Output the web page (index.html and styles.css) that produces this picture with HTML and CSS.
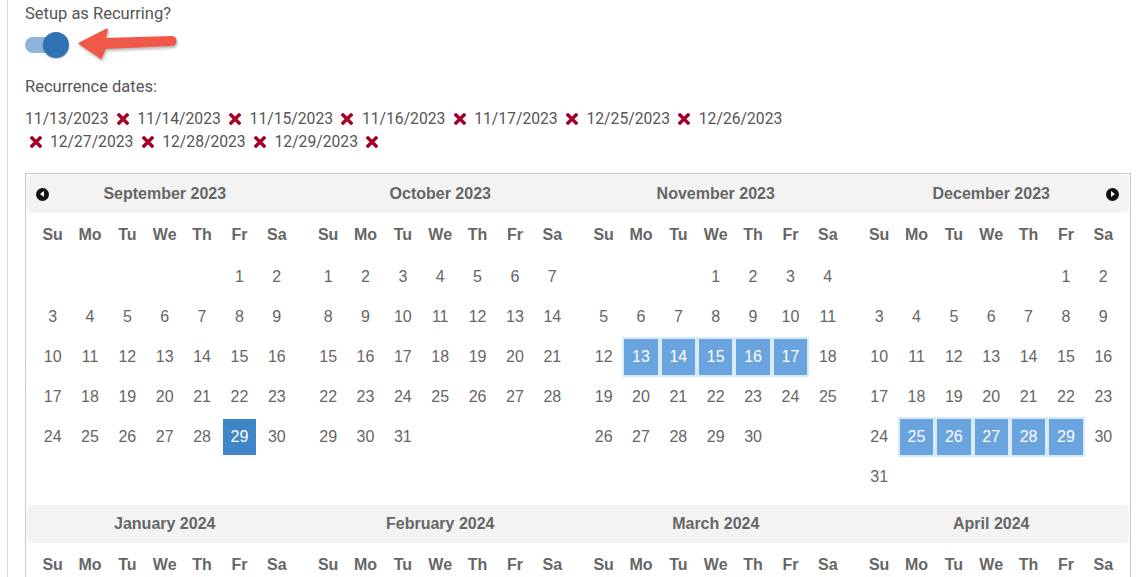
FILE: index.html
```html
<!DOCTYPE html>
<html lang="en">
<head>
    <meta charset="UTF-8">
    <title>Recurring Event</title>
    <link rel="stylesheet" href="styles.css">
</head>
<body>
    <div class="page">
        <div class="field-label">Setup as Recurring?</div>

        <div class="toggle-row">
            <div class="toggle">
                <div class="toggle-track"></div>
                <div class="toggle-knob"></div>
            </div>
            <svg class="arrow" width="104" height="36" viewBox="0 0 104 36">
                <path d="M3.5,16.3 L31,2.5 L28.5,12 L95,10 Q99.5,10 99.5,14 Q99.5,18 95,18 L29,21 L25,31 Z" fill="#f0594a" stroke="#f0594a" stroke-width="2" stroke-linejoin="round"/>
            </svg>
        </div>

        <div class="field-label second">Recurrence dates:</div>

        <div class="dates" id="dates"></div>

        <div class="calendar" id="calendar"></div>
    </div>

    <script>
        const dates = ["11/13/2023", "11/14/2023", "11/15/2023", "11/16/2023", "11/17/2023",
                       "12/25/2023", "12/26/2023", "12/27/2023", "12/28/2023", "12/29/2023"];
        const removeIcon = '<svg class="remove" width="12" height="12" viewBox="0 0 12 12">' +
            '<path d="M2,2 L10,10 M10,2 L2,10" stroke="#a5002c" stroke-width="3.4" stroke-linecap="square"/></svg>';

        document.getElementById("dates").innerHTML =
            dates.map(d => '<span class="date">' + d + '</span> ' + removeIcon).join(" ");

        const monthNames = ["January", "February", "March", "April", "May", "June", "July",
                            "August", "September", "October", "November", "December"];
        const months = [[2023, 8], [2023, 9], [2023, 10], [2023, 11],
                        [2024, 0], [2024, 1], [2024, 2], [2024, 3]];
        const selected = ["2023-10-13", "2023-10-14", "2023-10-15", "2023-10-16", "2023-10-17",
                          "2023-11-25", "2023-11-26", "2023-11-27", "2023-11-28", "2023-11-29"];
        const today = "2023-8-29";

        function buildMonth(year, month, pos) {
            let html = '<div class="month ' + pos + '"><div class="month-title">';
            if (pos === "first" && year === 2023) html += '<span class="nav prev"></span>';
            if (pos === "last" && year === 2023) html += '<span class="nav next"></span>';
            html += monthNames[month] + ' ' + year + '</div>';
            html += '<table class="days"><thead><tr>';
            ["Su", "Mo", "Tu", "We", "Th", "Fr", "Sa"].forEach(d => html += '<th>' + d + '</th>');
            html += '</tr></thead><tbody><tr>';

            const start = new Date(year, month, 1).getDay();
            const count = new Date(year, month + 1, 0).getDate();
            for (let i = 0; i < start; i++) html += '<td></td>';
            for (let day = 1; day <= count; day++) {
                const key = year + '-' + month + '-' + day;
                if (selected.includes(key)) {
                    html += '<td class="range"><span class="sel">' + day + '</span></td>';
                } else if (key === today) {
                    html += '<td class="today"><span class="sel">' + day + '</span></td>';
                } else {
                    html += '<td>' + day + '</td>';
                }
                if ((start + day) % 7 === 0 && day < count) html += '</tr><tr>';
            }
            const rest = (7 - (start + count) % 7) % 7;
            for (let i = 0; i < rest; i++) html += '<td></td>';
            html += '</tr></tbody></table></div>';
            return html;
        }

        let cal = "";
        for (let g = 0; g < months.length; g += 4) {
            cal += '<div class="cal-group">';
            for (let i = 0; i < 4; i++) {
                const pos = i === 0 ? "first" : (i === 3 ? "last" : "");
                cal += buildMonth(months[g + i][0], months[g + i][1], pos);
            }
            cal += '</div>';
        }
        document.getElementById("calendar").innerHTML = cal;
    </script>
</body>
</html>
```

FILE: styles.css
```css
body {
    margin: 0;
    font-family: Roboto, "Liberation Sans", sans-serif;
    color: #555;
    background-color: white;
}

.page {
    margin-left: 7px;
    border-left: 1px solid #d8d8d8;
    padding: 4px 5px 20px 17px;
    min-height: 100vh;
    box-sizing: border-box;
}

.field-label {
    font-size: 16.5px;
    line-height: 20px;
}

.field-label.second {
    margin-top: 19px;
}

.toggle-row {
    display: flex;
    align-items: center;
    height: 26px;
    margin-top: 8px;
}

.toggle {
    position: relative;
    width: 44px;
    height: 26px;
}

.toggle-track {
    width: 40px;
    height: 16px;
    margin-top: 5px;
    border-radius: 8px;
    background-color: #8fb3da;
}

.toggle-knob {
    position: absolute;
    left: 18px;
    top: 0;
    width: 26px;
    height: 26px;
    border-radius: 50%;
    background-color: #2f73b4;
    box-shadow: 0 1px 2px rgba(0, 0, 0, 0.25);
}

.arrow {
    margin-left: 7px;
    filter: drop-shadow(1px 2px 1.5px rgba(0, 0, 0, 0.3));
}

.dates {
    max-width: 772px;
    margin-top: 10px;
    font-size: 15.7px;
    line-height: 23px;
}

.remove {
    margin: 0 4.5px;
    vertical-align: -1px;
}

.calendar {
    margin-top: 20px;
    border: 1px solid #c6c6c6;
    padding: 1px;
    font-family: "Liberation Sans", Arial, sans-serif;
    color: #666;
}

.cal-group {
    display: grid;
    grid-template-columns: repeat(4, 1fr);
    margin-bottom: 8px;
}

.month-title {
    position: relative;
    height: 38px;
    line-height: 38px;
    background-color: #f3f3f3;
    text-align: center;
    font-size: 16px;
    font-weight: bold;
}

.month.first .month-title {
    border-radius: 5px 0 0 5px;
}

.month.last .month-title {
    border-radius: 0 5px 5px 0;
}

.nav {
    position: absolute;
    top: 12.5px;
    width: 13px;
    height: 13px;
    border-radius: 50%;
    background-color: #111;
}

.nav::after {
    content: "";
    position: absolute;
    top: 3.5px;
    border-top: 3px solid transparent;
    border-bottom: 3px solid transparent;
}

.nav.prev {
    left: 9px;
}

.nav.prev::after {
    left: 4px;
    border-right: 4px solid white;
}

.nav.next {
    right: 10px;
}

.nav.next::after {
    left: 5px;
    border-left: 4px solid white;
}

.days {
    width: calc(100% - 14px);
    margin: 0 7px;
    border-collapse: collapse;
    table-layout: fixed;
}

.days th {
    height: 44px;
    padding: 0;
    font-size: 16px;
    font-weight: bold;
    text-align: center;
}

.days td {
    height: 40px;
    padding: 0;
    font-size: 16px;
    text-align: center;
}

.days td.range {
    background-color: #d9eaf8;
}

.days .sel {
    display: block;
    margin: 2px;
    height: 36px;
    line-height: 36px;
    color: white;
}

.range .sel {
    background-color: #6aa4de;
}

.today .sel {
    background-color: #3e86c7;
}
```
